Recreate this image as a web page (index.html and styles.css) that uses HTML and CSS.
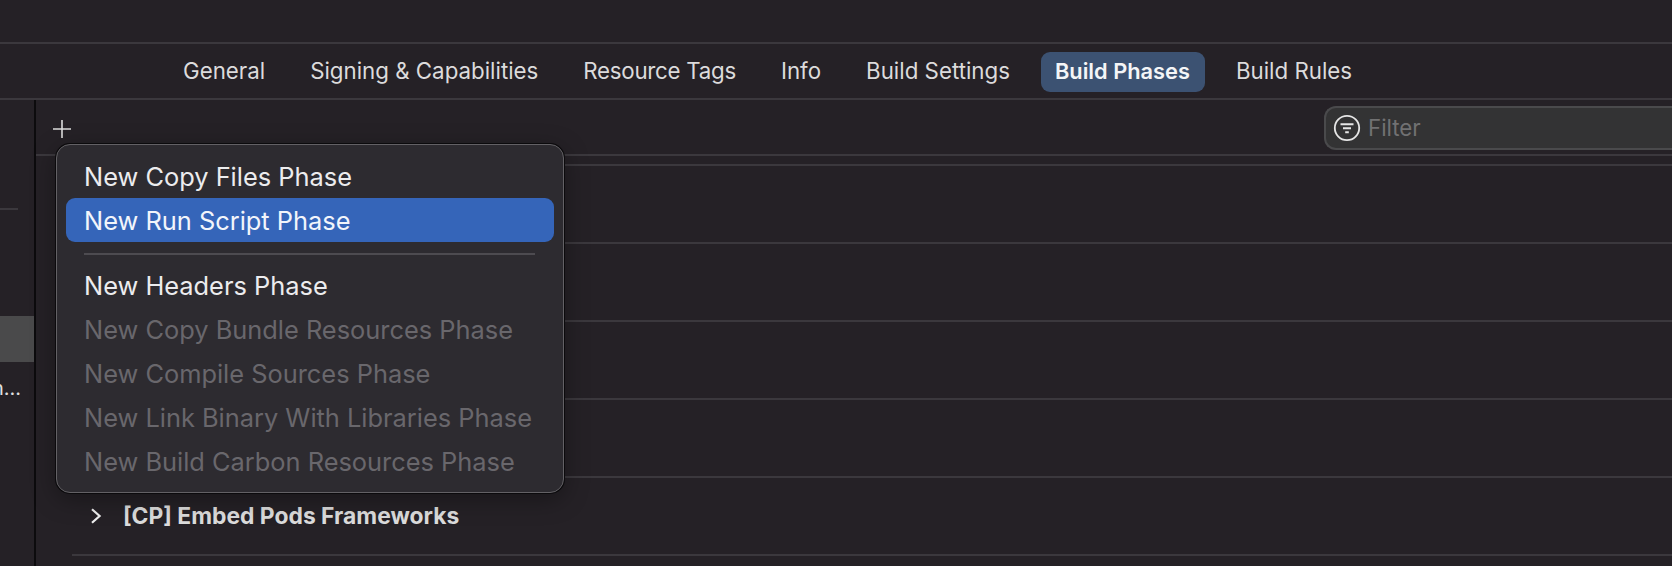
FILE: index.html
```html
<!DOCTYPE html>
<html lang="en">
<head>
<meta charset="utf-8">
<title>Build Phases</title>
<link rel="stylesheet" href="styles.css">
</head>
<body>
<div class="app">
  <header class="titlebar"></header>
  <nav class="tabs">
    <span class="tab">General</span>
    <span class="tab">Signing &amp; Capabilities</span>
    <span class="tab tab-tight">Resource Tags</span>
    <span class="tab">Info</span>
    <span class="tab">Build Settings</span>
    <span class="tab tab-active">Build Phases</span>
    <span class="tab">Build Rules</span>
  </nav>
  <div class="main">
    <aside class="sidebar">
      <div class="side-rule"></div>
      <div class="side-selected"></div>
      <div class="side-label">n...</div>
    </aside>
    <section class="content">
      <div class="toolbar">
        <svg class="plus" width="18" height="18" viewBox="0 0 18 18"><path d="M9 0V18M0 9H18" stroke="#dcdcdc" stroke-width="1.6" fill="none"/></svg>
        <div class="filter">
          <svg class="filter-icon" width="28" height="28" viewBox="0 0 28 28"><circle cx="14" cy="14" r="12.2" stroke="#e6e6e6" stroke-width="1.8" fill="none"/><path d="M7.5 10.2H20.5M10 14.2H18M12.2 18.2H15.8" stroke="#e6e6e6" stroke-width="1.9" fill="none"/></svg>
          <span class="filter-text">Filter</span>
        </div>
      </div>
      <div class="phases">
        <div class="phase"></div>
        <div class="phase"></div>
        <div class="phase"></div>
        <div class="phase"></div>
        <div class="phase phase-named">
          <svg class="chevron" width="12" height="16" viewBox="0 0 12 16"><path d="M2 1.2L9.6 8L2 14.8" stroke="#f0f0f0" stroke-width="2.2" fill="none"/></svg>
          <span class="phase-name">[CP] Embed Pods Frameworks</span>
        </div>
        <div class="phase"></div>
      </div>
    </section>
  </div>
  <div class="menu">
    <div class="item">New Copy Files Phase</div>
    <div class="item item-on">New Run Script Phase</div>
    <div class="sep"></div>
    <div class="item">New Headers Phase</div>
    <div class="item item-off">New Copy Bundle Resources Phase</div>
    <div class="item item-off">New Compile Sources Phase</div>
    <div class="item item-off">New Link Binary With Libraries Phase</div>
    <div class="item item-off">New Build Carbon Resources Phase</div>
  </div>
</div>
</body>
</html>
```
FILE: styles.css
```css
* { box-sizing: border-box; }
html, body { margin: 0; height: 100%; background: #252126; overflow: hidden; }
body { font-family: Inter, "Liberation Sans", sans-serif; color: #dedede; }
.app { position: relative; width: 1672px; height: 566px; overflow: hidden; }
.titlebar { height: 44px; border-bottom: 2px solid #3b383d; }
.tabs { height: 56px; border-bottom: 2px solid #3b383d; display: flex; align-items: flex-start; padding: 8px 0 0 169px; gap: 17px; font-size: 22.3px; }
.tab { height: 40px; line-height: 38px; padding: 0 14px; border-radius: 9px; color: #dcdbdc; }
.tab-tight { letter-spacing: -0.27px; }
.tab-active { background: #3c5272; color: #f4f5f7; font-weight: 600; font-size: 21.8px; padding-right: 15px; }
.main { display: flex; height: 466px; }
.sidebar { width: 36px; border-right: 2px solid #0c0b0d; padding-top: 108px; overflow: hidden; flex: none; }
.side-rule { width: 18px; height: 2px; background: #3b383d; }
.side-selected { height: 46px; margin-top: 106px; background: #4a4a4b; }
.side-label { margin-top: 13px; margin-left: -8px; font-size: 20px; line-height: 26px; color: #e0e0e0; white-space: nowrap; }
.content { flex: 1; min-width: 0; }
.toolbar { height: 56px; border-bottom: 2px solid #3b383d; display: flex; padding: 6px 0 0; position: relative; }
.plus { margin: 14px 0 0 17px; flex: none; }
.filter { margin-left: auto; width: 348px; height: 44px; border: 2px solid #4a4a4c; border-right: 0; border-radius: 12px 0 0 12px; background: #333334; display: flex; align-items: center; padding-left: 7px; gap: 7px; }
.filter-text { color: #717172; font-size: 22.3px; line-height: 26px; margin-top: -1px; }
.phases { padding-left: 36px; padding-top: 8px; }
.phase { height: 78px; border-top: 2px solid #3b383d; }
.phase-named { display: flex; align-items: center; padding-left: 18px; gap: 21px; }
.chevron { flex: none; }
.phase-name { font-weight: 700; font-size: 22.85px; color: #dcdcdc; }
.menu { position: absolute; left: 56px; top: 144px; width: 508px; height: 349px; padding: 9px 9px 8px; background: #2d2b30; border: 1.5px solid #636165; border-radius: 14px; box-shadow: 0 0 0 1px #0b0a0c, 0 6px 24px rgba(0,0,0,.35); font-size: 25.4px; }
.item { height: 44px; line-height: 46px; padding-left: 18px; border-radius: 9px; color: #ececee; white-space: nowrap; }
.item-on { background: #3565b9; color: #f2f5fb; }
.item-off { color: #69676c; }
.sep { height: 2px; margin: 10.5px 19px 8.5px 18px; background: #4d4b50; }
```
